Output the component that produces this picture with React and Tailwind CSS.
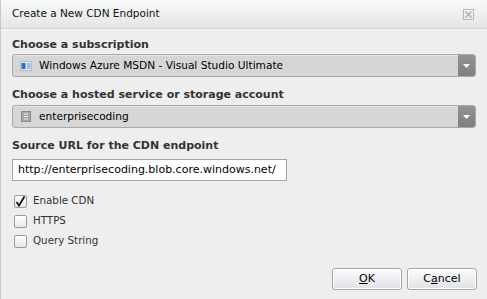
import React from "react";

const font = { fontFamily: '"DejaVu Sans", Verdana, sans-serif' };

function SelectBox({ icon, text }) {
  return (
    <div className="h-[23px] flex items-center rounded-[3px] border border-[#a8a8a8] bg-[#d6d6d6] shadow-[inset_0_1px_0_#e4e4e4]">
      <div className="w-[26px] flex justify-center">{icon}</div>
      <span className="flex-1 text-[10.6px] text-black">{text}</span>
      <div className="w-[17px] h-[21px] rounded-r-[2px] bg-gradient-to-b from-[#939393] to-[#7f7f7f] flex items-center justify-center">
        <svg width="7" height="4" viewBox="0 0 7 4">
          <path d="M0 0 H7 L3.5 4 Z" fill="#fff" />
        </svg>
      </div>
    </div>
  );
}

function Checkbox({ checked, label }) {
  return (
    <div className="flex items-center h-[20px]">
      <div className="w-[13px] h-[13px] ml-[13px] rounded-[2px] border border-[#9c9c9c] bg-gradient-to-b from-white to-[#e6e6e6] flex items-center justify-center">
        {checked && (
          <svg width="11" height="11" viewBox="0 0 11 11">
            <path d="M1.5 6 L4 9.5 L9.5 0.5" stroke="#111" strokeWidth="1.8" fill="none" />
          </svg>
        )}
      </div>
      <span className="ml-[6px] text-[10.3px] text-[#333]">{label}</span>
    </div>
  );
}

export default function App() {
  return (
    <div className="w-[487px] h-[299px] bg-[#eeeeee] border-l border-[#c8c8c8] flex flex-col" style={font}>
      {/* Title bar */}
      <div className="h-[29px] flex items-center justify-between bg-gradient-to-b from-[#f8f9f9] to-[#e3e5e7] border-b border-[#d2d5d8] pl-[11px] pr-[13px]">
        <span className="text-[10.5px] text-[#111]">Create a New CDN Endpoint</span>
        <svg width="11" height="11" viewBox="0 0 11 11">
          <rect x="0.5" y="0.5" width="10" height="10" fill="none" stroke="#b8b8b8" />
          <path d="M2.5 2.5 L8.5 8.5 M8.5 2.5 L2.5 8.5" stroke="#b0b0b0" strokeWidth="1.5" />
        </svg>
      </div>
      <div className="h-px bg-[#f6f6f6]" />

      <div className="flex flex-col pl-[11px] pr-[11px] pt-[7px]">
        <div className="text-[11px] font-bold text-[#333] h-[15px]">Choose a subscription</div>
        <div className="mt-[2px]">
          <SelectBox
            text="Windows Azure MSDN - Visual Studio Ultimate"
            icon={
              <svg width="12" height="10" viewBox="0 0 12 10">
                <rect x="0" y="0" width="12" height="10" fill="#dfe8f3" stroke="#7b9bc4" />
                <rect x="1.5" y="2" width="4" height="6" fill="#2f6fc6" />
                <path d="M7 3 H10.5 M7 5 H10.5 M7 7 H10.5" stroke="#6a8fc0" />
              </svg>
            }
          />
        </div>

        <div className="text-[11px] font-bold text-[#333] h-[15px] mt-[10px]">Choose a hosted service or storage account</div>
        <div className="mt-[3px]">
          <SelectBox
            text="enterprisecoding"
            icon={
              <svg width="10" height="11" viewBox="0 0 10 11">
                <rect x="0.5" y="0.5" width="9" height="10" fill="#a8a8a8" stroke="#8a8a8a" />
                <path d="M3 3 H7 M3 5.5 H7 M3 8 H7" stroke="#e8e8e8" />
              </svg>
            }
          />
        </div>

        <div className="text-[11px] font-bold text-[#333] h-[15px] mt-[10px]">Source URL for the CDN endpoint</div>
        <div className="mt-[6px] w-[275px] h-[22px] bg-white border border-[#a5a5a5] flex items-center pl-[5px] text-[11px] text-black">
          http://enterprisecoding.blob.core.windows.net/
        </div>

        <div className="mt-[10px] flex flex-col -ml-[11px]">
          <Checkbox checked label="Enable CDN" />
          <Checkbox label="HTTPS" />
          <Checkbox label="Query String" />
        </div>
      </div>

      <div className="flex-1" />
      <div className="flex justify-end gap-[5px] pr-[10px] pb-[9px]">
        <button className="w-[70px] h-[22px] rounded-[3px] border border-[#a3a6aa] bg-gradient-to-b from-[#fcfcfc] to-[#dfe2e6] shadow-[inset_0_0_0_1px_#ffffff] text-[11px] text-black">
          <span className="underline">O</span>K
        </button>
        <button className="w-[70px] h-[22px] rounded-[3px] border border-[#a3a6aa] bg-gradient-to-b from-[#fcfcfc] to-[#dfe2e6] shadow-[inset_0_0_0_1px_#ffffff] text-[11px] text-black">
          C<span className="underline">a</span>ncel
        </button>
      </div>
    </div>
  );
}
